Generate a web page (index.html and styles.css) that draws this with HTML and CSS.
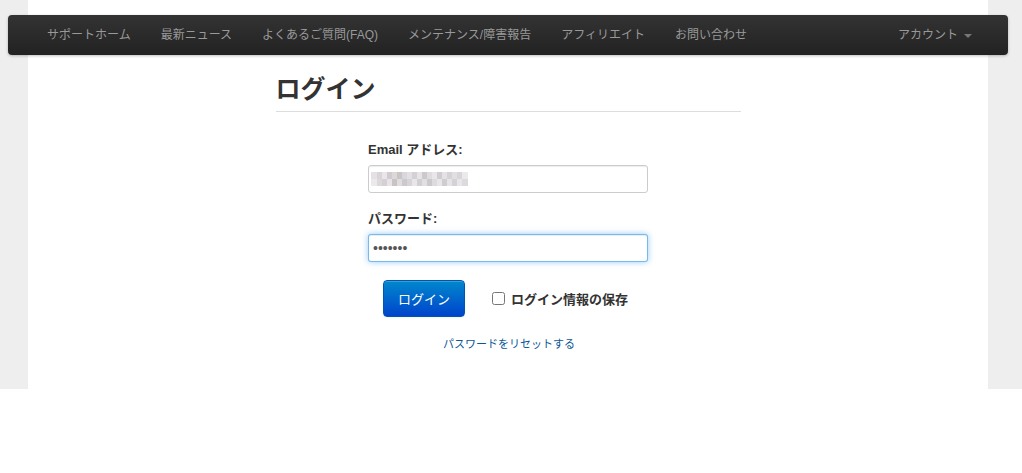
FILE: index.html
```html
<!DOCTYPE html>
<html lang="ja">
<head>
<meta charset="utf-8">
<title>ログイン</title>
<link rel="stylesheet" href="styles.css">
</head>
<body>
<div class="page">
  <div class="container">
    <nav class="navbar">
      <ul class="nav">
        <li><a href="#">サポートホーム</a></li>
        <li><a href="#">最新ニュース</a></li>
        <li><a href="#">よくあるご質問(FAQ)</a></li>
        <li><a href="#">メンテナンス/障害報告</a></li>
        <li><a href="#">アフィリエイト</a></li>
        <li><a href="#">お問い合わせ</a></li>
      </ul>
      <ul class="nav nav-right">
        <li><a href="#">アカウント<span class="caret"></span></a></li>
      </ul>
    </nav>

    <div class="content">
      <h1 class="title">ログイン</h1>
      <form class="login-form">
        <label class="field-label">Email アドレス:</label>
        <div class="input">
          <span class="mosaic"></span>
        </div>
        <label class="field-label second">パスワード:</label>
        <div class="input focused">
          <span class="dots">•••••••</span>
        </div>
        <div class="actions">
          <button type="button" class="btn">ログイン</button>
          <label class="remember"><input type="checkbox"> ログイン情報の保存</label>
        </div>
        <div class="reset"><a href="#">パスワードをリセットする</a></div>
      </form>
    </div>
  </div>
</div>
</body>
</html>
```

FILE: styles.css
```css
* { box-sizing: border-box; }

body {
  margin: 0;
  background: #fff;
  font-family: "Liberation Sans", "Noto Sans CJK JP", sans-serif;
  color: #333;
}

.page {
  background: #eeeeee;
  padding: 0 34px 0 28px;
}

.container {
  width: 960px;
  background: #fff;
  padding-top: 15px;
  padding-bottom: 35px;
}

.navbar {
  margin: 0 -20px;
  height: 40px;
  border-radius: 4px;
  background: linear-gradient(#333333, #222222);
  box-shadow: 0 1px 3px rgba(0,0,0,0.25);
  display: flex;
  justify-content: space-between;
  align-items: center;
  padding: 0 36px 0 24px;
}

.nav {
  list-style: none;
  margin: 0;
  padding: 0;
  display: flex;
}

.nav a {
  display: block;
  padding: 0 15px;
  line-height: 38px;
  color: #999999;
  font-size: 12px;
  text-decoration: none;
}

.nav-right a {
  padding-right: 0;
}

.caret {
  display: inline-block;
  width: 0;
  height: 0;
  margin-left: 6px;
  vertical-align: middle;
  border-top: 4px solid #777;
  border-left: 4px solid transparent;
  border-right: 4px solid transparent;
}

.content {
  width: 465px;
  margin: 0 auto;
}

.title {
  margin: 14px 0 0;
  font-size: 25px;
  line-height: 40px;
  font-weight: bold;
  color: #333;
  padding-bottom: 2px;
  border-bottom: 1px solid #dddddd;
}

.login-form {
  width: 280px;
  margin: 28px auto 0;
}

.field-label {
  display: block;
  font-size: 13px;
  font-weight: bold;
  line-height: 20px;
  color: #333;
  margin-bottom: 5px;
}

.field-label.second {
  margin-top: 16px;
}

.input {
  height: 28px;
  border: 1px solid #cccccc;
  border-radius: 3px;
  background: #fff;
  box-shadow: inset 0 1px 1px rgba(0,0,0,0.075);
  display: flex;
  align-items: center;
  padding: 0 4px;
}

.input.focused {
  border-color: rgba(82,168,236,0.8);
  box-shadow: inset 0 1px 1px rgba(0,0,0,0.075), 0 0 6px rgba(82,168,236,0.6);
}

.mosaic {
  display: block;
  width: 97px;
  height: 14px;
  margin-left: -2px;
  filter: blur(0.6px);
  background:
    linear-gradient(90deg,
      #e4e0e4 0 6px, #d8d4d8 6px 11px, #e8e6e8 11px 16px, #cfcbd0 16px 21px,
      #dcd8d6 21px 26px, #c8c4c8 26px 31px, #d8d8dc 31px 36px, #e2e0e2 36px 41px,
      #d4d0d4 41px 46px, #e6e4e6 46px 51px, #ccc8cc 51px 56px, #dedcde 56px 61px,
      #e8e6e8 61px 66px, #d0ccd0 66px 71px, #e4e2e4 71px 76px, #d6d2d8 76px 81px,
      #e0e0e0 81px 86px, #d8d6d8 86px 91px, #ebe9eb 91px 97px) 0 0 / 100% 7px no-repeat,
    linear-gradient(90deg,
      #ebe9eb 0 6px, #dcd8dc 6px 11px, #d4d0d4 11px 16px, #e6e4e6 16px 21px,
      #c8c4c6 21px 26px, #e0dce0 26px 31px, #ccc8cc 31px 36px, #d6d4d8 36px 41px,
      #e8e6e8 41px 46px, #d2cfd2 46px 51px, #e2dfe2 51px 56px, #ccc9cd 56px 61px,
      #dedbde 61px 66px, #e8e6e8 66px 71px, #d0cdd0 71px 76px, #e6e4e6 76px 81px,
      #d4d2d6 81px 86px, #e8e6e8 86px 91px, #dcdadc 91px 97px) 0 7px / 100% 7px no-repeat;
}

.dots {
  font-size: 14px;
  color: #555;
  letter-spacing: 0;
}

.actions {
  display: flex;
  align-items: center;
  margin-top: 18px;
  padding-left: 15px;
}

.btn {
  width: 82px;
  height: 37px;
  border: 1px solid #0055b3;
  border-radius: 4px;
  background: linear-gradient(#0088cc, #0044cc);
  color: #fff;
  font-family: "Liberation Sans", "Noto Sans CJK JP", sans-serif;
  font-size: 13px;
  box-shadow: inset 0 1px 0 rgba(255,255,255,0.2), 0 1px 2px rgba(0,0,0,0.05);
  padding: 0;
}

.remember {
  display: flex;
  align-items: center;
  margin-left: 27px;
  font-size: 13px;
  font-weight: bold;
  color: #333;
}

.remember input {
  margin: 0 6px 0 0;
  width: 13px;
  height: 13px;
}

.reset {
  margin-top: 16px;
  padding-left: 75px;
  line-height: 20px;
}

.reset a {
  font-size: 11px;
  color: #0b5796;
  text-decoration: none;
}
```
